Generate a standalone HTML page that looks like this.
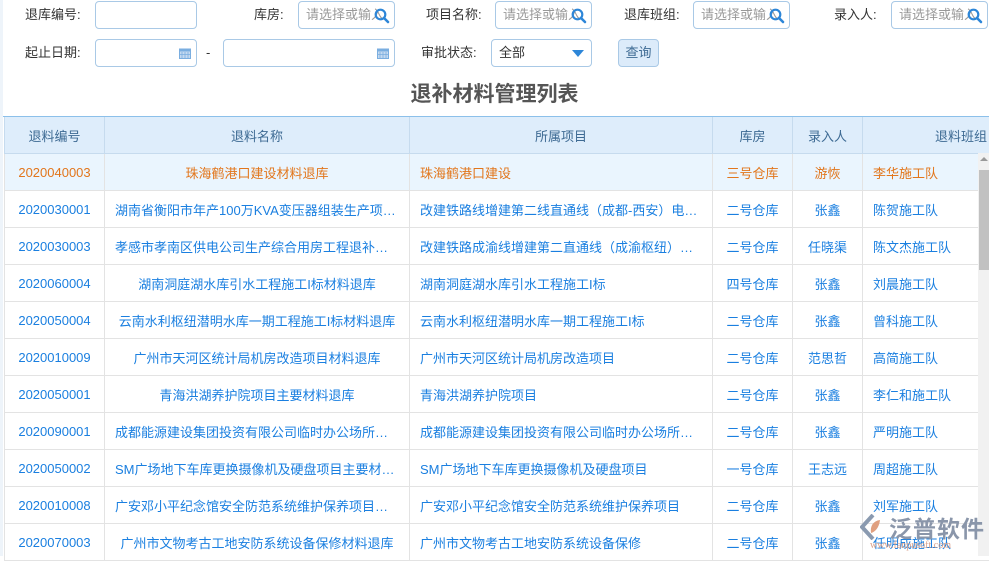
<!DOCTYPE html>
<html><head><meta charset="utf-8"><style>
*{margin:0;padding:0;box-sizing:border-box}
body{width:989px;height:556px;overflow:hidden;background:#fff;font-family:"Liberation Sans","Noto Sans CJK SC",sans-serif;font-size:13px;color:#333;position:relative}
.lbl{position:absolute;font-size:13px;color:#333;line-height:16px}
.inp{position:absolute;height:28px;border:1px solid #a9c9e6;border-radius:4px;background:#fff;font-size:13px;color:#999;line-height:26px;padding-left:7px;padding-right:22px;overflow:hidden;white-space:nowrap}
.inp svg{position:absolute;right:4px;top:6px}
.title{position:absolute;left:0;width:989px;top:78px;text-align:center;font-size:21px;font-weight:bold;color:#555}
table{position:absolute;left:4px;top:116px;border-collapse:collapse;table-layout:fixed;width:995px}
td,th{height:37px;border:1px solid #e3e3e3;font-weight:normal;font-size:13px;white-space:nowrap;overflow:hidden;text-overflow:ellipsis;color:#1a7fe0;text-align:center;padding:0}
th{background:#deedfb;color:#3d6a93;border-color:#c6dbee;height:37px}
tr.hl td{background:#eaf5fe;color:#e2761c}
td.l{text-align:left;padding-left:10px}
</style></head><body>
<div style="position:absolute;left:0;top:0;width:3px;height:556px;background:#eef4fa"></div>
<div class="lbl" style="left:25px;top:7px">退库编号:</div>
<div class="inp" style="left:95px;top:1px;width:102px"></div>
<div class="lbl" style="left:254px;top:7px">库房:</div>
<div class="inp" style="left:298px;top:1px;width:97px">请选择或输入<svg width="16" height="16" viewBox="0 0 16 16"><circle cx="6.5" cy="6.5" r="4.8" fill="none" stroke="#2d86d8" stroke-width="2.2"/><path d="M10 10l4 4" stroke="#2d86d8" stroke-width="2.6" stroke-linecap="round"/></svg></div>
<div class="lbl" style="left:426px;top:7px">项目名称:</div>
<div class="inp" style="left:495px;top:1px;width:97px">请选择或输入<svg width="16" height="16" viewBox="0 0 16 16"><circle cx="6.5" cy="6.5" r="4.8" fill="none" stroke="#2d86d8" stroke-width="2.2"/><path d="M10 10l4 4" stroke="#2d86d8" stroke-width="2.6" stroke-linecap="round"/></svg></div>
<div class="lbl" style="left:624px;top:7px">退库班组:</div>
<div class="inp" style="left:693px;top:1px;width:97px">请选择或输入<svg width="16" height="16" viewBox="0 0 16 16"><circle cx="6.5" cy="6.5" r="4.8" fill="none" stroke="#2d86d8" stroke-width="2.2"/><path d="M10 10l4 4" stroke="#2d86d8" stroke-width="2.6" stroke-linecap="round"/></svg></div>
<div class="lbl" style="left:834px;top:7px">录入人:</div>
<div class="inp" style="left:891px;top:1px;width:97px">请选择或输入<svg width="16" height="16" viewBox="0 0 16 16"><circle cx="6.5" cy="6.5" r="4.8" fill="none" stroke="#2d86d8" stroke-width="2.2"/><path d="M10 10l4 4" stroke="#2d86d8" stroke-width="2.6" stroke-linecap="round"/></svg></div>

<div class="lbl" style="left:25px;top:45px">起止日期:</div>
<div class="inp" style="left:95px;top:39px;width:102px"><svg width="12" height="12" viewBox="0 0 12 12" style="top:7px;right:5px"><rect x="0.5" y="2" width="11" height="9.5" fill="#c5daf0" stroke="#7aaee0"/><rect x="0.5" y="2" width="11" height="2.5" fill="#7aaee0"/><path d="M3 5v6M6 5v6M9 5v6M1 7.5h10" stroke="#7aaee0" stroke-width="0.8"/></svg></div>
<div class="lbl" style="left:206px;top:45px">-</div>
<div class="inp" style="left:223px;top:39px;width:172px"><svg width="12" height="12" viewBox="0 0 12 12" style="top:7px;right:5px"><rect x="0.5" y="2" width="11" height="9.5" fill="#c5daf0" stroke="#7aaee0"/><rect x="0.5" y="2" width="11" height="2.5" fill="#7aaee0"/><path d="M3 5v6M6 5v6M9 5v6M1 7.5h10" stroke="#7aaee0" stroke-width="0.8"/></svg></div>
<div class="lbl" style="left:421px;top:45px">审批状态:</div>
<div class="inp" style="left:491px;top:39px;width:101px;color:#333">全部<svg width="12" height="8" viewBox="0 0 12 8" style="top:10px;right:7px"><path d="M0 0h12L6 7z" fill="#2d86d8"/></svg></div>
<div style="position:absolute;left:618px;top:39px;width:41px;height:28px;background:#dcebfa;border:1px solid #a9c9e6;border-radius:4px;color:#3d6a93;font-size:13px;line-height:26px;text-align:center">查询</div>

<div class="title">退补材料管理列表</div>

<div style="position:absolute;left:3px;top:116px;width:986px;height:1px;background:#8cc0ea;z-index:2"></div>
<table>
<colgroup><col style="width:100px"><col style="width:305px"><col style="width:303px"><col style="width:80px"><col style="width:70px"><col style="width:137px"></colgroup>
<tr><th>退料编号</th><th>退料名称</th><th>所属项目</th><th>库房</th><th>录入人</th><th style="text-align:left;padding-left:72px">退料班组</th></tr>
<tr class="hl"><td>2020040003</td><td>珠海鹤港口建设材料退库</td><td class="l">珠海鹤港口建设</td><td>三号仓库</td><td>游恢</td><td class="l">李华施工队</td></tr>
<tr><td>2020030001</td><td class="l">湖南省衡阳市年产100万KVA变压器组装生产项…</td><td class="l">改建铁路线增建第二线直通线（成都-西安）电…</td><td>二号仓库</td><td>张鑫</td><td class="l">陈贺施工队</td></tr>
<tr><td>2020030003</td><td class="l">孝感市孝南区供电公司生产综合用房工程退补…</td><td class="l">改建铁路成渝线增建第二直通线（成渝枢纽）…</td><td>二号仓库</td><td>任晓渠</td><td class="l">陈文杰施工队</td></tr>
<tr><td>2020060004</td><td>湖南洞庭湖水库引水工程施工I标材料退库</td><td class="l">湖南洞庭湖水库引水工程施工I标</td><td>四号仓库</td><td>张鑫</td><td class="l">刘晨施工队</td></tr>
<tr><td>2020050004</td><td>云南水利枢纽潜明水库一期工程施工I标材料退库</td><td class="l">云南水利枢纽潜明水库一期工程施工I标</td><td>二号仓库</td><td>张鑫</td><td class="l">曾科施工队</td></tr>
<tr><td>2020010009</td><td>广州市天河区统计局机房改造项目材料退库</td><td class="l">广州市天河区统计局机房改造项目</td><td>二号仓库</td><td>范思哲</td><td class="l">高简施工队</td></tr>
<tr><td>2020050001</td><td>青海洪湖养护院项目主要材料退库</td><td class="l">青海洪湖养护院项目</td><td>二号仓库</td><td>张鑫</td><td class="l">李仁和施工队</td></tr>
<tr><td>2020090001</td><td class="l">成都能源建设集团投资有限公司临时办公场所…</td><td class="l">成都能源建设集团投资有限公司临时办公场所…</td><td>二号仓库</td><td>张鑫</td><td class="l">严明施工队</td></tr>
<tr><td>2020050002</td><td class="l">SM广场地下车库更换摄像机及硬盘项目主要材…</td><td class="l">SM广场地下车库更换摄像机及硬盘项目</td><td>一号仓库</td><td>王志远</td><td class="l">周超施工队</td></tr>
<tr><td>2020010008</td><td class="l">广安邓小平纪念馆安全防范系统维护保养项目…</td><td class="l">广安邓小平纪念馆安全防范系统维护保养项目</td><td>二号仓库</td><td>张鑫</td><td class="l">刘军施工队</td></tr>
<tr><td>2020070003</td><td>广州市文物考古工地安防系统设备保修材料退库</td><td class="l">广州市文物考古工地安防系统设备保修</td><td>二号仓库</td><td>张鑫</td><td class="l">任明成施工队</td></tr>
</table>
<div style="position:absolute;left:978px;top:153px;width:11px;height:403px;background:#f1f1f1"></div>
<div style="position:absolute;left:979px;top:170px;width:10px;height:100px;background:#c1c1c1"></div>
<div style="position:absolute;left:980px;top:157px;width:0;height:0;border-left:4px solid transparent;border-right:4px solid transparent;border-bottom:4px solid #999"></div>

<div style="position:absolute;left:858px;top:512px;width:130px;height:44px">
<svg width="26" height="26" viewBox="0 0 26 26" style="position:absolute;left:2px;top:2px"><path d="M13 1L2 13l11 12" fill="none" stroke="#8a9ab0" stroke-width="4"/><path d="M20 6c-7 1-10 6-9 13 4-1 8-5 9-13z" fill="#e0a080"/></svg>
<div style="position:absolute;left:31px;top:-2px;font-size:23px;color:#8a96aa;font-weight:bold;letter-spacing:1px">泛普软件</div>
<div style="position:absolute;left:12px;top:28px;font-size:10px;color:#d9a08a;font-family:'Liberation Serif',serif">www.fanpusoft.com</div>
</div>
</body></html>
